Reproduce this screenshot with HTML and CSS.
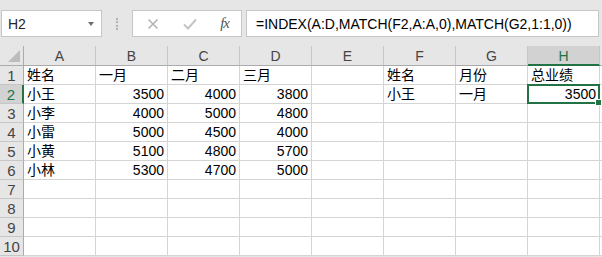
FILE: index.html
```html
<!DOCTYPE html>
<html lang="zh-CN">
<head>
    <meta charset="utf-8">
    <title>Sheet1</title>
    <link rel="stylesheet" href="styles.css">
</head>
<body>
    <div class="formula-bar">
        <div class="name-box">
            <span>H2</span>
            <span class="arrow"></span>
        </div>
        <div class="splitter"><span></span></div>
        <div class="fx-box">
            <svg class="icon" width="12" height="12" viewBox="0 0 12 12">
                <path d="M1.5 1.5 L10.5 10.5 M10.5 1.5 L1.5 10.5" stroke="#b3b3b3" stroke-width="1.6" fill="none"/>
            </svg>
            <svg class="icon" width="14" height="12" viewBox="0 0 14 12">
                <path d="M1 6.5 L5 10.5 L13 1.5" stroke="#c4c4c4" stroke-width="2" fill="none"/>
            </svg>
            <span class="fx"><i>f</i><i>x</i></span>
        </div>
        <div class="formula">=INDEX(A:D,MATCH(F2,A:A,0),MATCH(G2,1:1,0))</div>
    </div>

    <div class="sheet">
        <div class="corner"><span></span></div>
        <div class="col-head">A</div>
        <div class="col-head">B</div>
        <div class="col-head">C</div>
        <div class="col-head">D</div>
        <div class="col-head">E</div>
        <div class="col-head">F</div>
        <div class="col-head">G</div>
        <div class="col-head active">H</div>
        <div class="col-head rest"></div>

        <div class="row-head">1</div>
        <div class="cell">姓名</div>
        <div class="cell">一月</div>
        <div class="cell">二月</div>
        <div class="cell">三月</div>
        <div class="cell"></div>
        <div class="cell">姓名</div>
        <div class="cell">月份</div>
        <div class="cell">总业绩</div>
        <div class="cell rest"></div>

        <div class="row-head active">2</div>
        <div class="cell">小王</div>
        <div class="cell num">3500</div>
        <div class="cell num">4000</div>
        <div class="cell num">3800</div>
        <div class="cell"></div>
        <div class="cell">小王</div>
        <div class="cell">一月</div>
        <div class="cell num selected">3500<span class="handle"></span></div>
        <div class="cell rest"></div>

        <div class="row-head">3</div>
        <div class="cell">小李</div>
        <div class="cell num">4000</div>
        <div class="cell num">5000</div>
        <div class="cell num">4800</div>
        <div class="cell"></div>
        <div class="cell"></div>
        <div class="cell"></div>
        <div class="cell"></div>
        <div class="cell rest"></div>

        <div class="row-head">4</div>
        <div class="cell">小雷</div>
        <div class="cell num">5000</div>
        <div class="cell num">4500</div>
        <div class="cell num">4000</div>
        <div class="cell"></div>
        <div class="cell"></div>
        <div class="cell"></div>
        <div class="cell"></div>
        <div class="cell rest"></div>

        <div class="row-head">5</div>
        <div class="cell">小黄</div>
        <div class="cell num">5100</div>
        <div class="cell num">4800</div>
        <div class="cell num">5700</div>
        <div class="cell"></div>
        <div class="cell"></div>
        <div class="cell"></div>
        <div class="cell"></div>
        <div class="cell rest"></div>

        <div class="row-head">6</div>
        <div class="cell">小林</div>
        <div class="cell num">5300</div>
        <div class="cell num">4700</div>
        <div class="cell num">5000</div>
        <div class="cell"></div>
        <div class="cell"></div>
        <div class="cell"></div>
        <div class="cell"></div>
        <div class="cell rest"></div>

        <div class="row-head">7</div>
        <div class="cell"></div><div class="cell"></div><div class="cell"></div><div class="cell"></div>
        <div class="cell"></div><div class="cell"></div><div class="cell"></div><div class="cell"></div>
        <div class="cell rest"></div>

        <div class="row-head">8</div>
        <div class="cell"></div><div class="cell"></div><div class="cell"></div><div class="cell"></div>
        <div class="cell"></div><div class="cell"></div><div class="cell"></div><div class="cell"></div>
        <div class="cell rest"></div>

        <div class="row-head">9</div>
        <div class="cell"></div><div class="cell"></div><div class="cell"></div><div class="cell"></div>
        <div class="cell"></div><div class="cell"></div><div class="cell"></div><div class="cell"></div>
        <div class="cell rest"></div>

        <div class="row-head">10</div>
        <div class="cell"></div><div class="cell"></div><div class="cell"></div><div class="cell"></div>
        <div class="cell"></div><div class="cell"></div><div class="cell"></div><div class="cell"></div>
        <div class="cell rest"></div>
    </div>
</body>
</html>
```

FILE: styles.css
```css
body {
    margin: 0;
    width: 602px;
    height: 257px;
    overflow: hidden;
    background-color: #e6e6e6;
    font-family: "Liberation Sans", "Noto Sans CJK SC", sans-serif;
}

/* formula bar */
.formula-bar {
    display: flex;
    align-items: flex-start;
    height: 46px;
    padding-top: 10px;
    box-sizing: border-box;
}
.name-box,
.fx-box,
.formula {
    height: 27px;
    box-sizing: border-box;
    background: #fff;
    border: 1px solid #c6c6c6;
    display: flex;
    align-items: center;
}
.name-box {
    margin-left: 1px;
    width: 101px;
    padding: 0 7px 0 6px;
    justify-content: space-between;
    font-size: 14px;
    color: #262626;
}
.name-box .arrow {
    width: 0;
    height: 0;
    border-left: 3px solid transparent;
    border-right: 3px solid transparent;
    border-top: 4px solid #6d6d6d;
}
.splitter {
    width: 30px;
    height: 27px;
    display: flex;
    justify-content: center;
    align-items: center;
}
.splitter span {
    width: 0;
    height: 12px;
    border-left: 2px dotted #b0b0b0;
}
.fx-box {
    width: 110px;
    padding: 0 12px 0 14px;
    justify-content: space-between;
}
.fx {
    font-family: "Liberation Serif", serif;
    font-size: 15px;
    color: #555;
    letter-spacing: -1px;
}
.formula {
    flex: 1;
    margin: 0 3px 0 4px;
    padding-left: 9px;
    font-size: 14px;
    color: #000;
    white-space: nowrap;
}

/* worksheet grid */
.sheet {
    display: grid;
    grid-template-columns: 24px repeat(8, 72px) 1fr;
    grid-template-rows: 20px repeat(10, 19px);
    background: #fff;
}
.corner,
.col-head,
.row-head {
    background: #e6e6e6;
    color: #444;
    font-size: 14px;
    box-sizing: border-box;
    display: flex;
    align-items: center;
    justify-content: center;
}
.corner {
    border-right: 1px solid #ababab;
    border-bottom: 1px solid #ababab;
    position: relative;
}
.corner span {
    position: absolute;
    right: 3px;
    bottom: 3px;
    width: 0;
    height: 0;
    border-left: 12px solid transparent;
    border-bottom: 12px solid #bcbcbc;
}
.col-head {
    border-right: 1px solid #c6c6c6;
    border-bottom: 1px solid #ababab;
    padding-top: 1px;
}
.col-head.active {
    background: #d2d2d2;
    color: #217346;
    border-bottom: 2px solid #217346;
}
.row-head {
    border-right: 1px solid #ababab;
    border-bottom: 1px solid #c6c6c6;
    font-size: 15px;
}
.row-head.active {
    background: #d2d2d2;
    color: #217346;
    border-right: 2px solid #217346;
}
.rest {
    border-right: none;
}
.cell {
    border-right: 1px solid #d4d4d4;
    border-bottom: 1px solid #d4d4d4;
    box-sizing: border-box;
    font-size: 14px;
    line-height: 18px;
    padding: 0 3px;
    color: #000;
    white-space: nowrap;
}
.cell.num {
    text-align: right;
}
.cell.selected {
    position: relative;
    border: 2px solid #217346;
    margin: -1px 0 0 -1px;
    line-height: 16px;
    padding: 0 2px 0 3px;
}
.handle {
    position: absolute;
    right: -4px;
    bottom: -4px;
    width: 5px;
    height: 5px;
    background: #217346;
    border: 1px solid #fff;
}
```
